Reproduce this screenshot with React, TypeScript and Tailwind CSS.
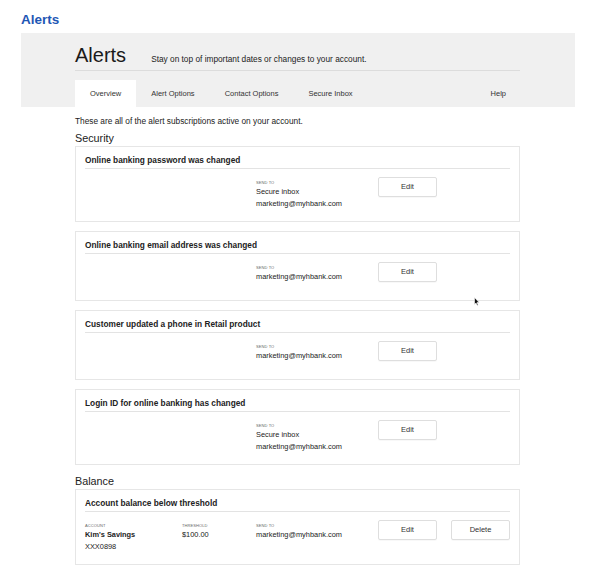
import React from "react";

type Alert = {
  title: string;
  account?: { name: string; number: string };
  threshold?: string;
  sendTo: string[];
  deletable?: boolean;
};

const security: Alert[] = [
  { title: "Online banking password was changed", sendTo: ["Secure inbox", "marketing@myhbank.com"] },
  { title: "Online banking email address was changed", sendTo: ["marketing@myhbank.com"] },
  { title: "Customer updated a phone in Retail product", sendTo: ["marketing@myhbank.com"] },
  { title: "Login ID for online banking has changed", sendTo: ["Secure inbox", "marketing@myhbank.com"] },
];

const balance: Alert[] = [
  {
    title: "Account balance below threshold",
    account: { name: "Kim's Savings", number: "XXX0898" },
    threshold: "$100.00",
    sendTo: ["marketing@myhbank.com"],
    deletable: true,
  },
];

function Label({ children }: { children: React.ReactNode }) {
  return (
    <div className="mt-[3px] text-[4px] leading-[6px] uppercase tracking-[0.1px] text-[#666]">{children}</div>
  );
}

function Btn({ children, extra = "" }: { children: React.ReactNode; extra?: string }) {
  return (
    <button
      className={
        "block shrink-0 w-[59px] h-[20px] mb-[7px] rounded-[2px] border border-[#dedede] bg-white text-[7.5px] leading-[18px] text-[#333] shadow-[0_1px_1px_rgba(0,0,0,0.03)] " +
        extra
      }
    >
      {children}
    </button>
  );
}

function Card({ a }: { a: Alert }) {
  return (
    <div className="mb-[9px] border border-[#e6e6e6] px-[9px] bg-white">
      <div className="pt-[7px] pb-[2px] border-b border-[#e3e3e3] text-[8.3px] leading-[12px] font-bold text-[#222]">
        {a.title}
      </div>
      <div className="flex items-start pt-[8px] pb-[11px]">
        <div className="w-[97px] shrink-0">
          {a.account && (
            <>
              <Label>Account</Label>
              <div className="text-[7.4px] leading-[12px] font-bold text-[#222]">{a.account.name}</div>
              <div className="text-[7.4px] leading-[12px] text-[#222]">{a.account.number}</div>
            </>
          )}
        </div>
        <div className="w-[74px] shrink-0">
          {a.threshold && (
            <>
              <Label>Threshold</Label>
              <div className="text-[7.4px] leading-[12px] text-[#222]">{a.threshold}</div>
            </>
          )}
        </div>
        <div className="w-[122px] shrink-0">
          <Label>Send to</Label>
          {a.sendTo.map((s) => (
            <div key={s} className="text-[7.4px] leading-[12px] text-[#222]">
              {s}
            </div>
          ))}
        </div>
        <Btn>Edit</Btn>
        {a.deletable && <Btn extra="ml-[14px]">Delete</Btn>}
      </div>
    </div>
  );
}

export default function App() {
  const tabs = ["Overview", "Alert Options", "Contact Options", "Secure Inbox"];
  return (
    <div className="relative w-[595px] min-h-[571px] bg-white font-['Liberation_Sans',Arial,sans-serif] text-[#222]">
      <div className="px-[21px] pt-[12px]">
        <h1 className="text-[13.5px] leading-[16px] font-bold text-[#1f57b5]">Alerts</h1>
      </div>
      <div className="mt-[5px] ml-[21px] w-[554px] bg-[#f0f0f0]">
        <div className="ml-[54px] w-[445px] pt-[10px]">
          <div className="flex items-baseline border-b border-[#dcdcdc] pb-[3px]">
            <span className="text-[20px] leading-[24px] text-[#1a1a1a]">Alerts</span>
            <span className="ml-[25px] text-[8.3px] text-[#222]">
              Stay on top of important dates or changes to your account.
            </span>
          </div>
          <div className="mt-[9px] flex h-[27px] text-[7.5px] text-[#333]">
            {tabs.map((t, i) => (
              <div
                key={t}
                className={
                  i === 0
                    ? "flex items-center px-[15px] bg-white"
                    : "flex items-center px-[15px]"
                }
              >
                {t}
              </div>
            ))}
            <div className="ml-auto flex items-center px-[14px]">Help</div>
          </div>
        </div>
      </div>
      <div className="ml-[75px] w-[445px] pt-[8px]">
        <p className="text-[8.3px] leading-[12px] text-[#222]">
          These are all of the alert subscriptions active on your account.
        </p>
        <h2 className="mt-[4px] text-[10.8px] leading-[15px] text-[#222]">Security</h2>
        {security.map((a) => (
          <Card key={a.title} a={a} />
        ))}
        <h2 className="text-[10.8px] leading-[15px] text-[#222]">Balance</h2>
        {balance.map((a) => (
          <Card key={a.title} a={a} />
        ))}
      </div>
      <svg
        className="absolute left-[474px] top-[297px]"
        width="6"
        height="9"
        viewBox="0 0 6 9"
      >
        <path d="M0.5 0.5 L0.5 7.5 L2 6 L3.2 8.5 L4.2 8 L3 5.6 L5.2 5.6 Z" fill="#111" stroke="#fff" strokeWidth="0.6" />
      </svg>
    </div>
  );
}
